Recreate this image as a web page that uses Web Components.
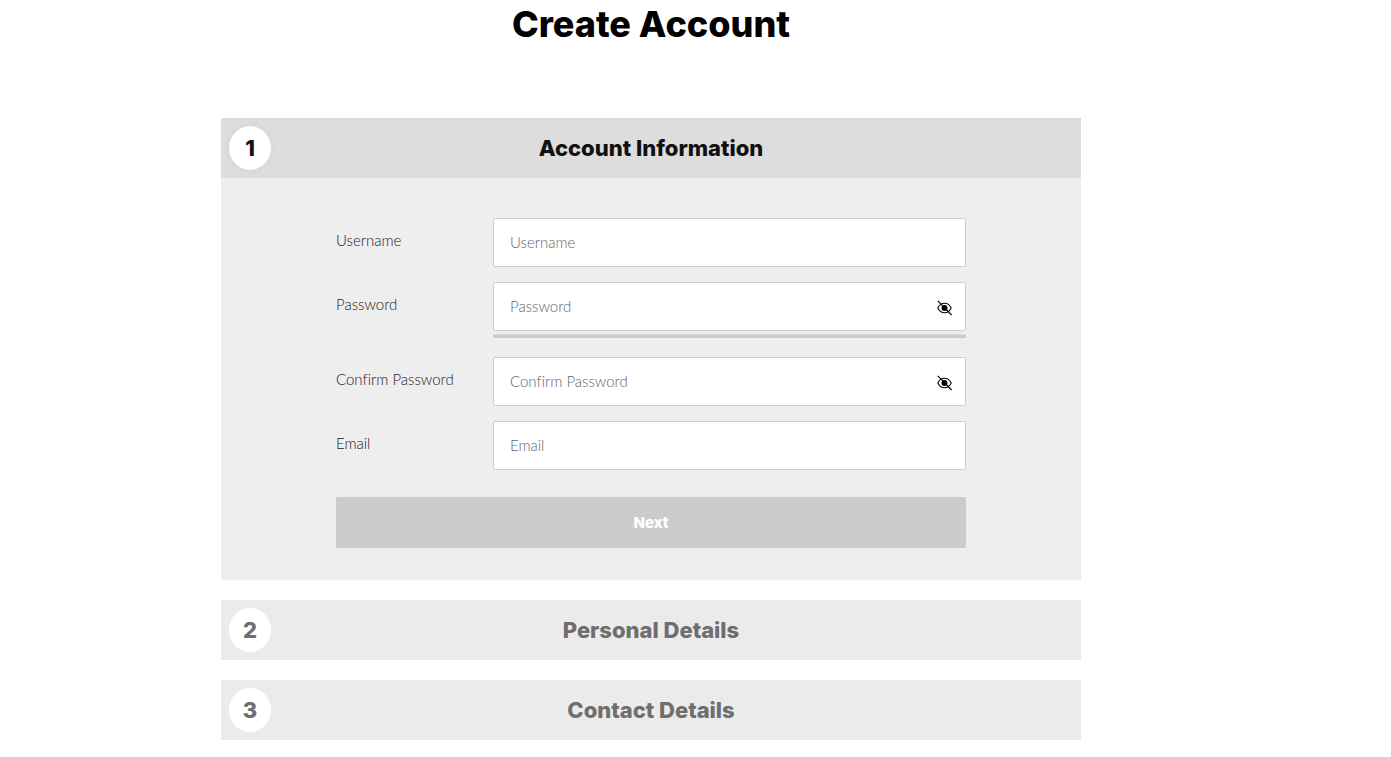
<!DOCTYPE html>
<html lang="en">
<head>
<meta charset="utf-8">
<meta name="viewport" content="width=device-width, initial-scale=1">
<title>Create Account</title>
<style>
body { margin: 0; background: #fff; color: #000; font-family: Lato, "Open Sans", sans-serif; font-size: 16px; font-variant-ligatures: none; --heading-font: Inter, "Open Sans", sans-serif; }
</style>
</head>
<body>
<account-page>
  <account-step number="1" heading="Account Information" active>
    <account-form>
      <form-field label="Username" name="username"></form-field>
      <form-field label="Password" name="password" type="password" meter></form-field>
      <form-field label="Confirm Password" name="confirm" type="password"></form-field>
      <form-field label="Email" name="email" type="email"></form-field>
    </account-form>
  </account-step>
  <account-step number="2" heading="Personal Details"></account-step>
  <account-step number="3" heading="Contact Details"></account-step>
</account-page>

<script>
class AccountPage extends HTMLElement {
  constructor() {
    super();
    this.attachShadow({ mode: "open" }).innerHTML = `
      <style>
        :host { display: block; padding: 0 89px 16px 0; }
        main { max-width: 860px; margin: 0 auto; }
        h1 { margin: 0 0 70px; font-family: var(--heading-font); font-size: 36px; line-height: 48px; font-weight: 800; text-align: center; }
        .steps { display: flex; flex-direction: column; gap: 20px; }
      </style>
      <main>
        <h1>Create Account</h1>
        <div class="steps"><slot></slot></div>
      </main>`;
  }
}

class AccountStep extends HTMLElement {
  constructor() {
    super();
    this.attachShadow({ mode: "open" }).innerHTML = `
      <style>
        :host { display: block; background: #ebebeb; color: #6e6e6e; }
        :host([active]) { background: #eee; color: #111; }
        header { display: grid; grid-template-columns: 42px 1fr 42px; align-items: center; padding: 8px; }
        :host([active]) header { background: #ddd; }
        .number { height: 44px; border-radius: 50%; background: #fff; text-align: center; line-height: 44px; }
        :host([active]) .number { box-shadow: 0 0 6px rgba(0, 0, 0, .06); }
        .number, h2 { font-family: var(--heading-font); font-size: 22px; font-weight: 800; }
        h2 { margin: 0; line-height: 44px; text-align: center; }
      </style>
      <header><span class="number"></span><h2></h2></header>
      <slot></slot>`;
    this.shadowRoot.querySelector(".number").textContent = this.getAttribute("number");
    this.shadowRoot.querySelector("h2").textContent = this.getAttribute("heading");
  }
}

class AccountForm extends HTMLElement {
  constructor() {
    super();
    this.attachShadow({ mode: "open" }).innerHTML = `
      <style>
        :host { display: block; }
        form { max-width: 630px; margin: 0 auto; padding: 40px 0 32px; }
        .fields { display: flex; flex-direction: column; gap: 15px; }
        button { display: block; width: 100%; height: 51px; margin: 27px 0 0; border: 0; border-radius: 2px; background: #ccc; color: #fff; font-family: var(--heading-font); font-size: 15px; font-weight: 800; }
      </style>
      <form>
        <div class="fields"><slot></slot></div>
        <button type="button">Next</button>
      </form>`;
  }
}

class FormField extends HTMLElement {
  constructor() {
    super();
    const label = this.getAttribute("label");
    const name = this.getAttribute("name");
    const type = this.getAttribute("type") || "text";
    const toggle = type === "password" ? `
      <button type="button" aria-label="Show password">
        <svg viewBox="0 0 16 16" width="16" height="16" fill="none" stroke="#000" aria-hidden="true">
          <path d="M.8 8C2.200 4.900 4.600 3.200 7.500 3.200S12.800 4.900 14.200 8C12.800 11.100 10.400 12.800 7.500 12.800S2.200 11.100 .8 8Z" stroke-width="1.100"/>
          <circle cx="7.500" cy="8" r="3" fill="#000" stroke="none"/>
          <path d="M.8 .8L14.600 15" stroke-width="1.100"/>
        </svg>
      </button>` : "";
    this.attachShadow({ mode: "open" }).innerHTML = `
      <style>
        :host { display: grid; grid-template-columns: 157px 1fr; font-weight: 300; }
        label { padding: 10px 0 0; font-size: 15px; line-height: 24px; color: #222; }
        .box { display: flex; align-items: center; box-sizing: border-box; height: 49px; border: 1px solid #ccc; border-radius: 2px; background: #fff; }
        input { flex: 1; min-width: 0; height: 100%; box-sizing: border-box; padding: 0 16px 2px; border: 0; outline: 0; background: none; font: inherit; font-size: 15px; color: #222; }
        input::placeholder { color: #666; opacity: 1; }
        button { display: flex; padding: 0; margin: 2px 12px 0 0; border: 0; background: none; }
        .meter { height: 3px; margin: 3px 0 4px; border-top: 1px solid #ddd; background: #ccc; }
      </style>
      <label for="control">${label}</label>
      <div>
        <div class="box"><input id="control" name="${name}" type="${type}" placeholder="${label}">${toggle}</div>
        ${this.hasAttribute("meter") ? '<div class="meter"></div>' : ""}
      </div>`;
  }
}

customElements.define("account-page", AccountPage);
customElements.define("account-step", AccountStep);
customElements.define("account-form", AccountForm);
customElements.define("form-field", FormField);
</script>
</body>
</html>
